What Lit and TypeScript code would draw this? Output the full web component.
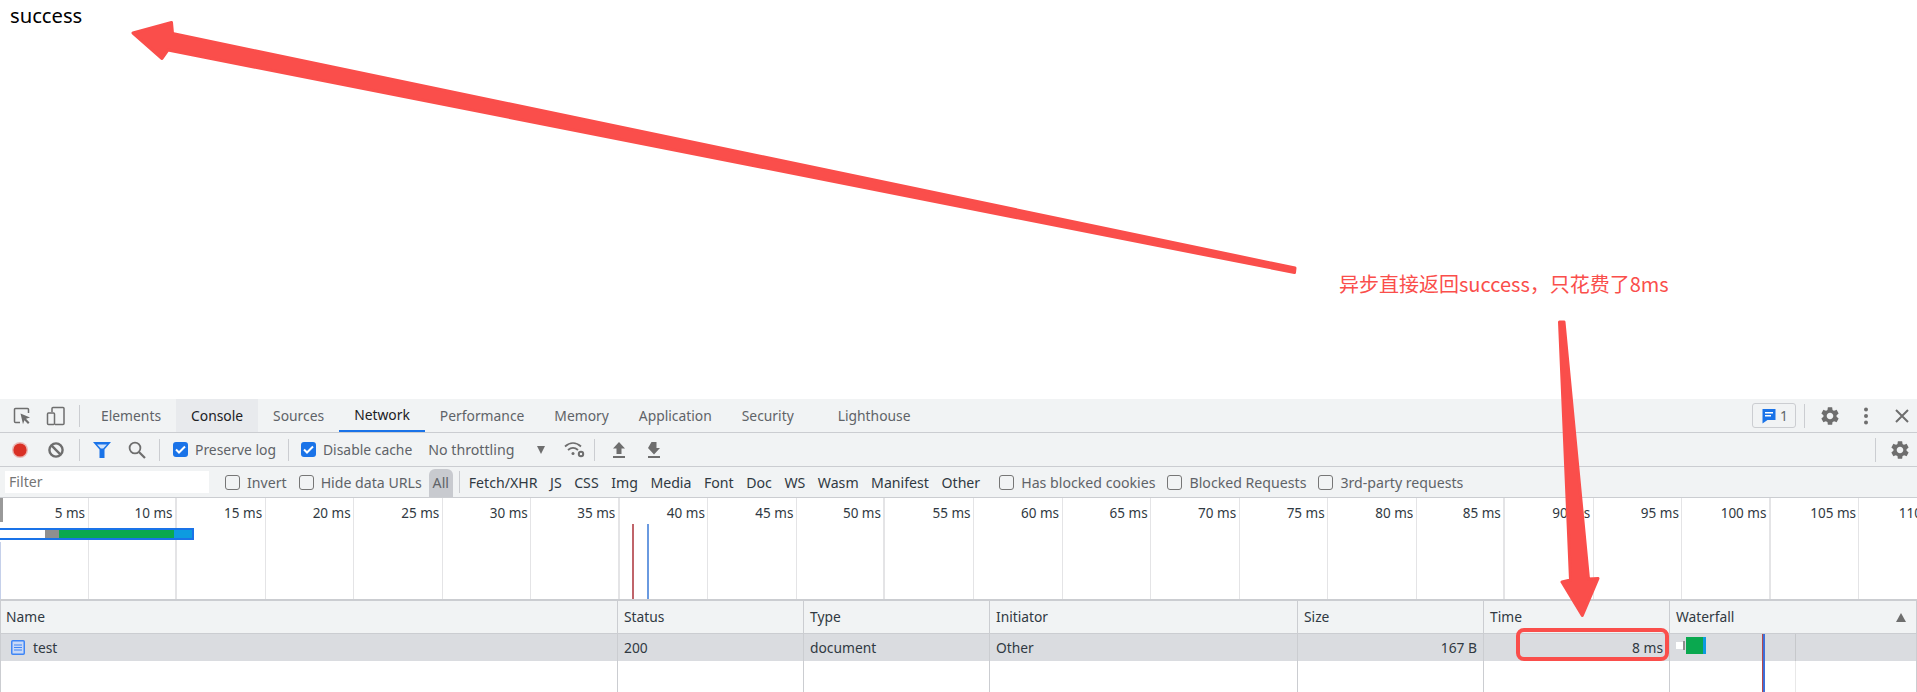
import { LitElement, html, css, svg } from "lit";
import { customElement } from "lit/decorators.js";

const GEAR =
  "M19.14 12.94c.04-.3.06-.61.06-.94 0-.32-.02-.64-.07-.94l2.03-1.58c.18-.14.23-.41.12-.61l-1.92-3.32c-.12-.22-.37-.29-.59-.22l-2.39.96c-.5-.38-1.03-.7-1.62-.94l-.36-2.54c-.04-.24-.24-.41-.48-.41h-3.84c-.24 0-.43.17-.47.41l-.36 2.54c-.59.24-1.13.57-1.62.94l-2.39-.96c-.22-.08-.47 0-.59.22L2.74 8.87c-.12.21-.08.47.12.61l2.03 1.58c-.05.3-.09.63-.09.94s.02.64.07.94l-2.03 1.58c-.18.14-.23.41-.12.61l1.92 3.32c.12.22.37.29.59.22l2.39-.96c.5.38 1.03.7 1.62.94l.36 2.54c.05.24.24.41.48.41h3.84c.24 0 .44-.17.47-.41l.36-2.54c.59-.24 1.13-.56 1.62-.94l2.39.96c.22.08.47 0 .59-.22l1.92-3.32c.12-.22.07-.47-.12-.61l-2.01-1.58zM12 15.6c-1.98 0-3.6-1.62-3.6-3.6s1.62-3.6 3.6-3.6 3.6 1.62 3.6 3.6-1.62 3.6-3.6 3.6z";

const gear = (cls: string) => html`<svg class="ic ${cls}" viewBox="0 0 24 24"><path fill="#6e6e6e" d=${GEAR}></path></svg>`;

const TABS = ["Elements", "Console", "Sources", "Network", "Performance", "Memory", "Application", "Security", "Lighthouse"];
const CHIPS = ["Fetch/XHR", "JS", "CSS", "Img", "Media", "Font", "Doc", "WS", "Wasm", "Manifest", "Other"];
const HEAVY = new Set([1, 6, 9, 16, 19]);
const COLS: [string, string][] = [
  ["Name", ""],
  ["Status", "200"],
  ["Type", "document"],
  ["Initiator", "Other"],
  ["Size", "167 B"],
  ["Time", "8 ms"],
  ["Waterfall", ""],
];

@customElement("app-root")
export class AppRoot extends LitElement {
  static styles = css`
    :host {
      display: block;
      width: 1917px;
      height: 692px;
      position: relative;
      overflow: hidden;
      background: #fff;
      font-family: "Noto Sans", "Noto Sans CJK SC", sans-serif;
      font-size: 13.8px;
      color: #303942;
    }
    .page {
      height: 399px;
      box-sizing: border-box;
      padding: 1px 0 0 10px;
      font-size: 20.2px;
      line-height: 28px;
      color: #000;
    }
    .ic { display: block; flex: none; }
    .bar {
      display: flex;
      align-items: center;
      background: #f1f3f4;
      border-bottom: 1px solid #cbcdd1;
      box-sizing: border-box;
      white-space: nowrap;
      color: #5f6368;
    }
    .sep { flex: none; width: 1px; height: 22px; background: #cbcdd1; }

    .tabs { height: 34px; padding-left: 13px; }
    .tabs .sep { margin: 0 6px 0 13px; }
    .i-inspect { width: 18px; height: 18px; }
    .i-device { width: 20px; height: 20px; margin-left: 15px; }
    .tab { height: 33px; padding: 0 15px; line-height: 33px; box-sizing: border-box; flex: none; font-size: 13.85px; }
    .tab.hover { background: #e8eaed; color: #202124; }
    .tab.on { color: #202124; border-bottom: 2px solid #1a73e8; line-height: 32px; }
    .tab.last { margin-left: 14px; }
    .end { margin-left: auto; display: flex; align-items: center; }
    .badge {
      display: flex;
      align-items: center;
      width: 44px;
      height: 25px;
      box-sizing: border-box;
      border: 1px solid #cbcdd1;
      border-radius: 3px;
      padding-left: 8px;
      gap: 3px;
    }
    .i-msg { width: 16px; height: 16px; }
    .end .sep { margin: 0 14px 0 8px; height: 24px; }
    .i-gear { width: 22px; height: 22px; }
    .i-kebab { width: 16px; height: 20px; margin-left: 17px; }
    .i-close { width: 16px; height: 16px; margin: 0 7px 0 20px; }

    .tools { height: 34px; padding-left: 12px; font-size: 13.9px; }
    .i-record { width: 16px; height: 16px; }
    .i-clear { width: 18px; height: 18px; margin-left: 19px; }
    .tools .sep { margin: 0 13px; }
    .tools .s1 { margin-left: 14px; }
    .i-filter { width: 18px; height: 16px; }
    .i-search { width: 18px; height: 18px; margin-left: 17px; }
    .tools .s2 { margin-left: 13px; margin-right: 13px; }
    .check {
      flex: none;
      width: 15px;
      height: 15px;
      border-radius: 3px;
      box-sizing: border-box;
    }
    .check.yes { background: #1a73e8; }
    .check.no { border: 1px solid #767676; }
    .lab { margin-left: 7px; }
    .tools .s3 { margin: 0 12px 0 12px; }
    .throttle { margin-left: 16px; width: 109px; font-size: 14.2px; }
    .tri { width: 8px; height: 8px; }
    .i-wifi { width: 22px; height: 18px; margin-left: 19px; }
    .tools .s4 { margin: 0 17px 0 8px; }
    .i-arrow { width: 14px; height: 16px; }
    .i-arrow + .i-arrow { margin-left: 21px; }
    .tools .end .sep { margin: 0 13px 0 0; }
    .i-gear2 { width: 22px; height: 22px; margin-right: 6px; }

    .filters { height: 31px; padding-left: 5px; position: relative; font-size: 14.15px; }
    .input {
      width: 204px;
      height: 22px;
      background: #fff;
      box-sizing: border-box;
      padding-left: 4px;
      line-height: 22px;
      color: #757575;
      flex: none;
    }
    .filters .check { margin-left: 12px; }
    .filters .first { margin-left: 16px; }
    .filters .lab { color: #5f6368; }
    .all {
      margin-left: 7px;
      width: 24px;
      height: 28px;
      margin-top: 2px;
      line-height: 28px;
      text-align: center;
      background: #c8cacf;
      border-radius: 6px 6px 0 0;
      flex: none;
    }
    .filters .sep { height: 22px; margin: 0 9px 0 6px; }
    .chips { display: flex; gap: 12.5px; color: #303942; }
    .filters .after { margin-left: 19px; }

    .over { height: 101px; position: relative; overflow: hidden; display: flex; background: #fff; }
    .tick {
      flex: none;
      width: 88.55px;
      height: 100%;
      box-sizing: border-box;
      border-right: 1px solid #e4e4e6;
      text-align: right;
      padding: 6px 2.5px 0 0;
      line-height: 18px;
      color: #303942;
      font-size: 13.5px;
    }
    .tick.heavy { border-right-width: 2px; }
    .handle { position: absolute; left: 0; top: 0; width: 3px; height: 24px; background: #999; }
    .edge { position: absolute; left: 0; top: 44px; bottom: 0; width: 1px; background: #c5d0ea; }
    .ovbar {
      position: absolute;
      left: 0;
      top: 30px;
      width: 194px;
      height: 12px;
      display: flex;
      box-sizing: border-box;
      border: 2px solid #1a73e8;
      border-left: 0;
      background: #fff;
    }
    .seg { height: 100%; flex: none; }
    .s-w { width: 45px; background: #fff; }
    .s-g { width: 14px; background: #8f8f8f; }
    .s-v { width: 115px; background: #0aa84f; }
    .s-b { width: 18px; background: #0d9be0; }
    .mark { position: absolute; top: 26px; bottom: 0; width: 2px; }
    .m-r { left: 632px; background: #c0646a; }
    .m-b { left: 647px; background: #6a9ae0; }

    .table {
      height: 94px;
      display: grid;
      grid-template-columns: 617px 186px 186px 308px 186px 186px 1fr;
      grid-template-rows: 33px 27px 1fr;
      border-top: 2px solid #cbcdd1;
      box-sizing: border-box;
      border-left: 1px solid #cbcdd1;
      position: relative;
    }
    .hd {
      background: #f1f3f4;
      border-right: 1px solid #cbcdd1;
      border-bottom: 1px solid #cbcdd1;
      padding: 0 6px;
      line-height: 32px;
      color: #303942;
      display: flex;
      justify-content: space-between;
      align-items: center;
    }
    .hd:first-child { padding-left: 5px; }
    .cell {
      background: #dadce0;
      border-right: 1px solid #cbcdd1;
      padding: 0 6px;
      line-height: 27px;
      color: #303942;
    }
    .cell.num { text-align: right; }
    .cell.name { display: flex; align-items: center; padding-left: 10px; gap: 8px; }
    .cell.fall { position: relative; }
    .i-doc { width: 14px; height: 15px; }
    .blank { border-right: 1px solid #cbcdd1; }
    .sort { width: 10px; height: 9px; margin-right: 4px; }
    .w1 { position: absolute; left: 6px; top: 8px; width: 7px; height: 7px; background: #fff; }
    .w2 { position: absolute; left: 13px; top: 7px; width: 2px; height: 9px; background: #8f8f8f; }
    .w3 { position: absolute; left: 16px; top: 3px; width: 17px; height: 17px; background: #0aa84f; }
    .w4 { position: absolute; left: 33px; top: 3px; width: 3px; height: 17px; background: #0d9be0; }
    .line { position: absolute; top: 634px; bottom: 0; }
    .l-r { left: 1762px; width: 1px; background: #b5474f; }
    .l-b { left: 1763px; width: 2px; background: #3f6fd8; }
    .l-g { left: 1795px; width: 1px; background: rgba(0, 0, 0, 0.09); }

    .overlay { position: absolute; left: 0; top: 0; width: 1917px; height: 692px; pointer-events: none; }
    .note {
      position: absolute;
      left: 1339px;
      top: 270px;
      font-family: "Noto Sans CJK SC", "Noto Sans", sans-serif;
      font-size: 20px;
      line-height: 28px;
      color: #fa4e4b;
      white-space: nowrap;
    }
  `;

  private msgIcon() {
    return html`<svg class="ic i-msg" viewBox="0 0 16 16">
      <path fill="#1a73e8" d="M1.5 1h13v11h-8l-5 3.5z"></path>
      <path fill="#fff" d="M4 4h8v1.5H4zM4 7h6v1.5H4z"></path>
    </svg>`;
  }

  private tick() {
    return svg`<path fill="none" stroke="#fff" stroke-width="2" d="M3 7.500l3 3 6-6"></path>`;
  }

  render() {
    const ticks = Array.from({ length: 22 }, (_, i) => i);
    return html`
      <div class="page">success</div>

      <div class="bar tabs">
        <svg class="ic i-inspect" viewBox="0 0 18 18" fill="none">
          <path stroke="#6e6e6e" stroke-width="1.5" d="M7 15.5H2.5a1 1 0 0 1-1-1V2.5a1 1 0 0 1 1-1h12a1 1 0 0 1 1 1V6"></path>
          <path fill="#6e6e6e" d="M7.5 6.5l9.5 4-4 1.3 3.5 3.7-1.5 1.5-3.600-3.700-1.400 3.900z"></path>
        </svg>
        <svg class="ic i-device" viewBox="0 0 20 20" fill="none" stroke="#6e6e6e" stroke-width="1.5">
          <path d="M6 6V2.5a1 1 0 0 1 1-1h10a1 1 0 0 1 1 1v15a1 1 0 0 1-1 1H9"></path>
          <rect x="1.5" y="7" width="7" height="11.5" rx="1"></rect>
        </svg>
        <div class="sep"></div>
        ${TABS.map(
          (t) => html`<div class="tab ${t === "Console" ? "hover" : ""} ${t === "Network" ? "on" : ""} ${t === "Lighthouse" ? "last" : ""}">${t}</div>`
        )}
        <div class="end">
          <div class="badge">${this.msgIcon()}<span>1</span></div>
          <div class="sep"></div>
          ${gear("i-gear")}
          <svg class="ic i-kebab" viewBox="0 0 16 20" fill="#6e6e6e">
            <circle cx="8" cy="3.5" r="2"></circle><circle cx="8" cy="10" r="2"></circle><circle cx="8" cy="16.5" r="2"></circle>
          </svg>
          <svg class="ic i-close" viewBox="0 0 16 16" fill="none" stroke="#6e6e6e" stroke-width="2">
            <path d="M2 2l12 12M14 2L2 14"></path>
          </svg>
        </div>
      </div>

      <div class="bar tools">
        <svg class="ic i-record" viewBox="0 0 16 16">
          <circle cx="8" cy="8" r="8" fill="#d93025" opacity=".3"></circle>
          <circle cx="8" cy="8" r="6.6" fill="#d93025"></circle>
        </svg>
        <svg class="ic i-clear" viewBox="0 0 18 18" fill="none" stroke="#6e6e6e" stroke-width="2.4">
          <circle cx="9" cy="9" r="6.6"></circle><path d="M4.4 4.4l9.2 9.2"></path>
        </svg>
        <div class="sep s1"></div>
        <svg class="ic i-filter" viewBox="0 0 18 16">
          <path fill="#1a73e8" d="M0 0h18l-6.5 7.5V16h-5V7.5z"></path>
          <path fill="#cfe2fb" d="M4 2.4h10l-3.8 4.2H7.8z"></path>
        </svg>
        <svg class="ic i-search" viewBox="0 0 18 18" fill="none" stroke="#6e6e6e" stroke-width="1.8">
          <circle cx="7" cy="7" r="5.4"></circle><path stroke-width="2.2" d="M11 11l6 6"></path>
        </svg>
        <div class="sep s2"></div>
        <svg class="ic check yes" viewBox="0 0 15 15">${this.tick()}</svg>
        <span class="lab">Preserve log</span>
        <div class="sep s3"></div>
        <svg class="ic check yes" viewBox="0 0 15 15">${this.tick()}</svg>
        <span class="lab">Disable cache</span>
        <span class="throttle">No throttling</span>
        <svg class="ic tri" viewBox="0 0 8 8"><path fill="#6e6e6e" d="M0 0h8L4 8z"></path></svg>
        <svg class="ic i-wifi" viewBox="0 0 22 18" fill="none" stroke="#6e6e6e" stroke-width="1.8">
          <path d="M1 5.500c5-4.600 11-4.600 16 0M4 9c3.200-2.800 6.800-2.800 10 0"></path>
          <circle cx="9" cy="12.500" r="1.500" fill="#6e6e6e" stroke="none"></circle>
          <circle cx="17" cy="13" r="2.200" stroke-width="2"></circle>
        </svg>
        <div class="sep s4"></div>
        <svg class="ic i-arrow" viewBox="0 0 14 16" fill="#6e6e6e"><path d="M7 0l6 6.500H9.500V12h-5V6.500H1zM1 14h12v2H1z"></path></svg>
        <svg class="ic i-arrow" viewBox="0 0 14 16" fill="#6e6e6e"><path d="M4.500 0h5v6H13l-6 6.500L1 6zM1 14h12v2H1z"></path></svg>
        <div class="end">
          <div class="sep"></div>
          ${gear("i-gear2")}
        </div>
      </div>

      <div class="bar filters">
        <div class="input">Filter</div>
        <div class="check no first"></div>
        <span class="lab">Invert</span>
        <div class="check no"></div>
        <span class="lab">Hide data URLs</span>
        <div class="all">All</div>
        <div class="sep"></div>
        <div class="chips">${CHIPS.map((c) => html`<span>${c}</span>`)}</div>
        <div class="check no after"></div>
        <span class="lab">Has blocked cookies</span>
        <div class="check no"></div>
        <span class="lab">Blocked Requests</span>
        <div class="check no"></div>
        <span class="lab">3rd-party requests</span>
      </div>

      <div class="over">
        ${ticks.map((i) => html`<div class="tick ${HEAVY.has(i) ? "heavy" : ""}">${(i + 1) * 5} ms</div>`)}
        <div class="handle"></div>
        <div class="edge"></div>
        <div class="ovbar">
          <div class="seg s-w"></div><div class="seg s-g"></div><div class="seg s-v"></div><div class="seg s-b"></div>
        </div>
        <div class="mark m-r"></div>
        <div class="mark m-b"></div>
      </div>

      <div class="table">
        ${COLS.map(
          ([h]) => html`<div class="hd"><span>${h}</span>${h === "Waterfall"
            ? html`<svg class="ic sort" viewBox="0 0 10 9"><path fill="#6e6e6e" d="M5 0l5 9H0z"></path></svg>`
            : ""}</div>`
        )}
        ${COLS.map(([h, v]) => {
          if (h === "Name")
            return html`<div class="cell name">
              <svg class="ic i-doc" viewBox="0 0 14 15">
                <rect x=".75" y=".75" width="12.500" height="13.500" rx="1" fill="#c9d9f7" stroke="#3f86f5" stroke-width="1.500"></rect>
                <path stroke="#3f86f5" stroke-width="1.200" d="M3 5h8M3 7.500h8M3 10h8"></path>
              </svg>
              <span>test</span>
            </div>`;
          if (h === "Waterfall")
            return html`<div class="cell fall"><i class="w1"></i><i class="w2"></i><i class="w3"></i><i class="w4"></i></div>`;
          return html`<div class="cell ${h === "Size" || h === "Time" ? "num" : ""}">${v}</div>`;
        })}
        ${COLS.map(() => html`<div class="blank"></div>`)}
      </div>

      <div class="line l-r"></div>
      <div class="line l-b"></div>
      <div class="line l-g"></div>

      <svg class="overlay" viewBox="0 0 1917 692">
        <g fill="#fa4e4b" stroke="#fa4e4b" stroke-width="3" stroke-linejoin="round">
          <path d="M133 33L171.500 22.500L172.500 33.500L1295 268L1294.500 272.500L168 50L162 58.500Z"></path>
          <path d="M1559.500 322L1564 322L1588.500 579L1598 578.500L1582.300 615.500L1562 582L1570.500 580Z"></path>
        </g>
        <rect x="1518" y="630" width="149" height="29" rx="6" fill="none" stroke="#fa4e4b" stroke-width="4"></rect>
      </svg>
      <div class="note">异步直接返回success，只花费了8ms</div>
    `;
  }
}
